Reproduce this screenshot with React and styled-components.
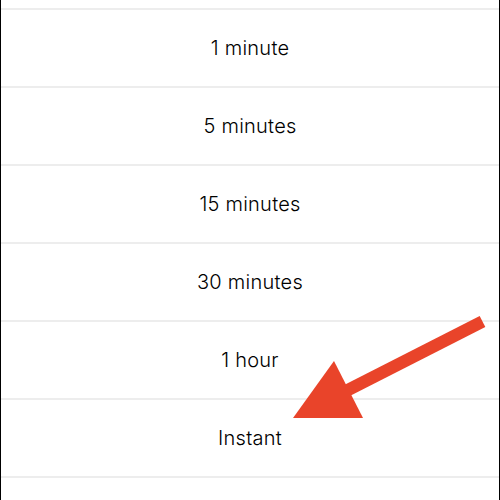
import React from 'react';
import styled, { createGlobalStyle } from 'styled-components';

const GlobalStyle = createGlobalStyle`
    html, body {
        margin: 0;
        padding: 0;
        background: #ffffff;
    }
`

const Screen = styled.div`
    position: relative;
    width: 500px;
    height: 500px;
    overflow: hidden;
    box-sizing: border-box;
    border-left: 1px solid #000;
    border-right: 1px solid #000;
    background: #ffffff;
`

const List = styled.div`
    display: flex;
    flex-direction: column;
`

const Row = styled.div`
    flex: none;
    height: ${props => props.$height || 78}px;
    box-sizing: border-box;
    border-bottom: 2px solid #ededed;
    display: flex;
    align-items: center;
    justify-content: center;
    font-family: Inter, Roboto, "Liberation Sans", sans-serif;
    font-size: 20px;
    font-weight: 300;
    letter-spacing: 0.25px;
    color: #000;
`

const Arrow = styled.svg`
    position: absolute;
    left: 0;
    top: 0;
    pointer-events: none;
`

const options = ['1 minute', '5 minutes', '15 minutes', '30 minutes', '1 hour', 'Instant'];

const App = () => {
    return (
        <>
            <GlobalStyle />
            <Screen>
                <List>
                    <Row $height={10} />
                    {options.map(option => <Row key={option}>{option}</Row>)}
                    <Row />
                </List>
                <Arrow width="500" height="500" viewBox="0 0 500 500">
                    <line x1="481.5" y1="321.5" x2="345" y2="391" stroke="#e9442a" strokeWidth="12.5" />
                    <polygon points="292,418 333,361 362,418" fill="#e9442a" />
                </Arrow>
            </Screen>
        </>
    )
}

export default App
